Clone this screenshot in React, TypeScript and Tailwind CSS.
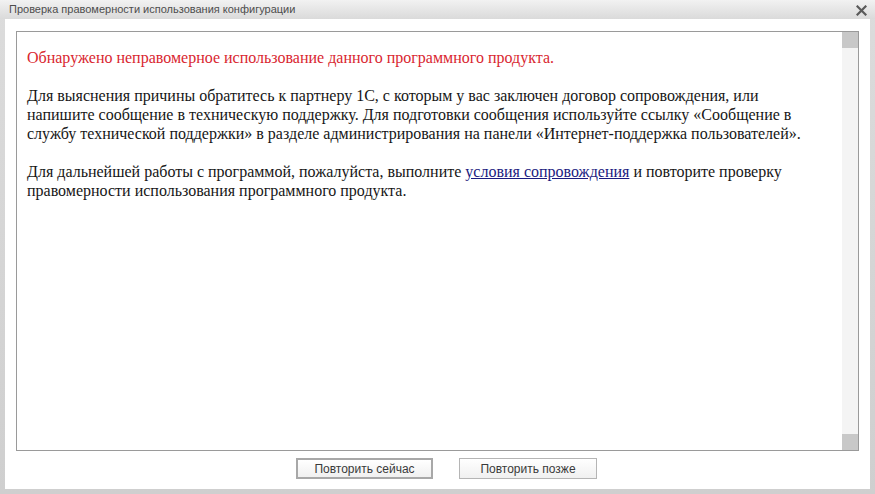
export default function App() {
  return (
    <div className="w-[875px] h-[494px] flex flex-col bg-gradient-to-b from-[#dcdcdc] to-[#cfcfcf] font-['Liberation_Sans',Arial,sans-serif] overflow-hidden">
      {/* Title bar */}
      <div className="h-[19px] flex items-center justify-between pl-[9px] pr-[8px] bg-gradient-to-b from-[#f2f2f2] to-[#dadada]">
        <span className="text-[11px] text-[#4d4d4d] leading-none">Проверка правомерности использования конфигурации</span>
        <svg width="11" height="11" viewBox="0 0 11 11" className="mt-[1px]">
          <path d="M1.5 1.5 L9.5 9.5 M9.5 1.5 L1.5 9.5" stroke="#5a5a5a" strokeWidth="2.2" strokeLinecap="square" />
        </svg>
      </div>

      {/* Window body */}
      <div className="flex-1 ml-[5px] mr-[5px] mb-[5px] bg-white flex flex-col pt-[12px] px-[11px]">
        <div className="h-[420px] border border-[#9a9a9a] flex">
          <div className="flex-1 pl-[10px] pt-[16px] font-['Liberation_Serif','Times_New_Roman',serif] text-[16px] leading-[19px] text-[#161616]">
            <p className="text-[#d9262f]">Обнаружено неправомерное использование данного программного продукта.</p>
            <p className="mt-[19px]">
              Для выяснения причины обратитесь к партнеру 1С, с которым у вас заключен договор сопровождения, или
              <br />
              напишите сообщение в техническую поддержку. Для подготовки сообщения используйте ссылку «Сообщение в
              <br />
              службу технической поддержки» в разделе администрирования на панели «Интернет-поддержка пользователей».
            </p>
            <p className="mt-[19px]">
              Для дальнейшей работы с программой, пожалуйста, выполните{' '}
              <a className="text-[#1a1a80] underline">условия сопровождения</a> и повторите проверку
              <br />
              правомерности использования программного продукта.
            </p>
          </div>
          {/* Scrollbar */}
          <div className="w-[16px] bg-[#f4f4f4] flex flex-col justify-between">
            <div className="h-[16px] bg-[#c8c8c8]" />
            <div className="h-[16px] bg-[#c8c8c8]" />
          </div>
        </div>

        <div className="flex mt-[7px] pl-[280px] gap-[26px] text-[12px] text-[#3a3a3a]">
          <button className="w-[137px] h-[21px] border-2 border-[#a8a8a8] bg-gradient-to-b from-white to-[#f0f0f0] leading-none">
            Повторить сейчас
          </button>
          <button className="w-[138px] h-[21px] border border-[#b5b5b5] bg-gradient-to-b from-white to-[#f0f0f0] leading-none">
            Повторить позже
          </button>
        </div>
      </div>
    </div>
  );
}
